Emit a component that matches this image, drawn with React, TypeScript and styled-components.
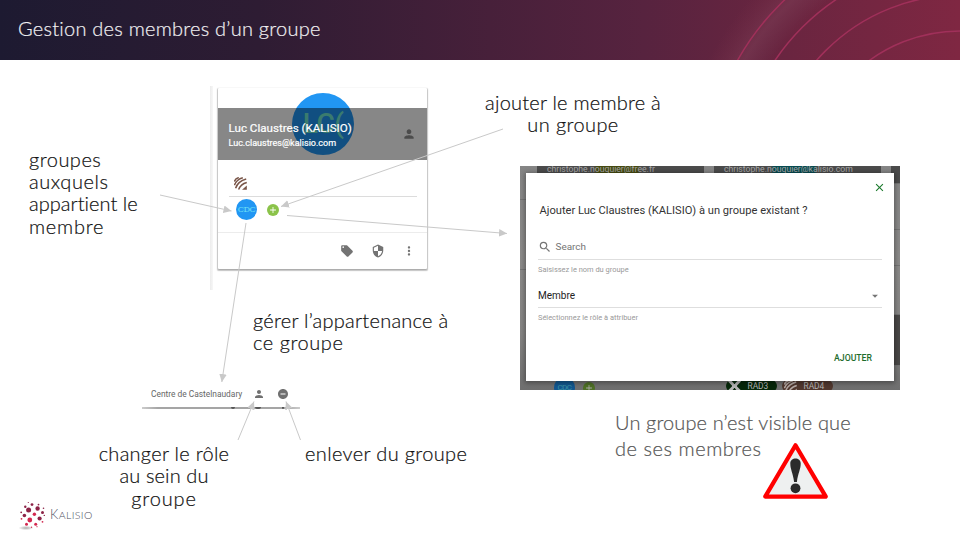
import React from "react";
import styled, { createGlobalStyle } from "styled-components";
import {
  MdAdd, MdArrowDropDown, MdClose, MdLocalOffer, MdMoreVert,
  MdPerson, MdRemoveCircle, MdSearch, MdSecurity,
} from "react-icons/md";

const Global = createGlobalStyle`
  * { box-sizing: border-box; }
  body { margin: 0; background: #fff; font-family: Roboto, "Liberation Sans", sans-serif; }
  svg { display: block; flex: none; }
`;

const Slide = styled.main`
  width: 960px;
  height: 540px;
  overflow: hidden;
  display: flex;
  flex-direction: column;
  background: #fff;
`;

const Header = styled.header`
  position: relative;
  flex: none;
  height: 60px;
  padding: 0 0 4px 18px;
  display: flex;
  align-items: center;
  background: linear-gradient(90deg, #1d1a31 0%, #2e1c33 27%, #47203a 51%, #57233f 67%, #6a2540 82%, #7f2742 100%);
`;

const HeaderArcs = styled.svg`
  position: absolute;
  right: 0;
  top: 0;
`;

const Title = styled.h1`
  margin: 0;
  font: 300 20px/24px Lato, sans-serif;
  letter-spacing: 0.24px;
  color: #f1f0f2;
  -webkit-text-stroke: 0.2px #f1f0f2;
`;

/* Free canvas under the header: captions, captures and arrows are pinned on it. */
const Canvas = styled.section`
  position: relative;
  flex: 1;
`;

const Pin = styled.div<{ $x: number; $y: number; $w?: number }>`
  position: absolute;
  left: ${(p) => p.$x}px;
  top: ${(p) => p.$y - 60}px;
  ${(p) => p.$w && `width: ${p.$w}px;`}
`;

const Caption = styled(Pin)<{ $center?: boolean; $muted?: boolean }>`
  display: flex;
  flex-direction: column;
  align-items: ${(p) => (p.$center ? "center" : "flex-start")};
  font: 300 20px/${(p) => (p.$muted ? 26 : 22.4)}px Lato, sans-serif;
  color: ${(p) => (p.$muted ? "#555" : "#111")};
  -webkit-text-stroke: 0.2px currentColor;
  white-space: nowrap;
`;

const Line = styled.span<{ $track?: number }>`
  letter-spacing: ${(p) => p.$track ?? 0}px;
`;

const PageEdge = styled(Pin)`
  height: 204px;
  background: linear-gradient(90deg, #ececec, #f7f7f7);
`;

const Card = styled(Pin)`
  height: 181px;
  display: flex;
  flex-direction: column;
  background: #fff;
  border-radius: 1px;
  box-shadow: 0 1px 2px 0 rgba(0, 0, 0, 0.25), 0 1px 1px 0.5px rgba(0, 0, 0, 0.17);
`;

const Cover = styled.div`
  position: relative;
  height: 72px;
  display: flex;
  flex-direction: column;
  justify-content: flex-end;
`;

const BigAvatar = styled.div`
  position: absolute;
  left: 74px;
  top: 5px;
  width: 62px;
  height: 62px;
  border-radius: 50%;
  display: grid;
  place-items: center;
  background: #2196f3;
  color: #6fe8d0;
  font: 500 28px/1 Roboto, sans-serif;
  letter-spacing: -0.5px;
`;

const Shade = styled.div`
  position: relative;
  height: 52px;
  padding: 0 11px 0 10.5px;
  display: flex;
  align-items: center;
  justify-content: space-between;
  background: rgba(0, 0, 0, 0.47);
  color: #4c4c4c;
`;

const Identity = styled.div`
  display: flex;
  flex-direction: column;
  padding-top: 3px;
  color: #fff;
`;

const Name = styled.span`
  font: 11.6px/16px Roboto, sans-serif;
  -webkit-text-stroke: 0.2px #fff;
`;

const Mail = styled.span`
  font: 9.03px/15px Roboto, sans-serif;
  -webkit-text-stroke: 0.2px #fff;
`;

const OrgRow = styled.div`
  height: 37px;
  margin: 0 10px 0 11px;
  padding: 17px 0 0 4.5px;
  border-bottom: 1px solid #dcdcdc;
`;

const GroupRow = styled.div`
  height: 36px;
  padding: 2px 0 0 18px;
  display: flex;
  align-items: flex-start;
  gap: 9.5px;
  border-bottom: 1px solid #ececec;
`;

const GroupBadge = styled.span<{ $dim?: boolean }>`
  flex: none;
  width: 21px;
  height: 21px;
  border-radius: 50%;
  display: grid;
  place-items: center;
  background: ${(p) => (p.$dim ? "#12578f" : "#2196f3")};
  color: ${(p) => (p.$dim ? "#3d93a3" : "#6fe0f5")};
  font: ${(p) => (p.$dim ? `8px/1 Roboto, sans-serif` : `8.2px/1 "DejaVu Serif", serif`)};
  letter-spacing: -0.5px;
`;

const AddBadge = styled.span<{ $dim?: boolean }>`
  flex: none;
  width: 12px;
  height: 12px;
  margin-top: 5px;
  border-radius: 50%;
  display: grid;
  place-items: center;
  background: ${(p) => (p.$dim ? "#4f7027" : "#8bc34a")};
  color: ${(p) => (p.$dim ? "#aaa" : "#fff")};
`;

const CardActions = styled.div`
  flex: 1;
  display: flex;
  align-items: center;
  justify-content: flex-end;
  gap: 17px;
  padding-right: 11.5px;
  color: #737373;
`;

const Capture = styled(Pin)`
  height: 224px;
  display: grid;
  grid-template-rows: 7px 208px 9px;
  overflow: hidden;
  background: linear-gradient(#858585, #8b8a89 40%, #858483 75%, #6f6f6f);
`;

const BackStrip = styled.div`
  display: flex;
  gap: 10px;
  padding-left: 17px;
  overflow: hidden;
`;

const BackCover = styled.div<{ $hue: string }>`
  flex: none;
  width: 167px;
  padding-left: 10px;
  background: linear-gradient(90deg, #4b4b4b 34%, ${(p) => p.$hue} 36%, ${(p) => p.$hue} 60%, #4b4b4b 62%);
  color: #a8a8a8;
  font: 8.67px/7px Roboto, sans-serif;
`;

const Middle = styled.div`
  display: grid;
  grid-template-columns: 6px 368px 6px;
`;

const SideGutter = styled.div`
  display: flex;
  flex-direction: column;
`;

const SideBlock = styled.div<{ $h: number; $tone?: string }>`
  height: ${(p) => p.$h}px;
  background: ${(p) => p.$tone ?? "transparent"};
  border-bottom: 1px solid #747474;
`;

const Dialog = styled.div`
  position: relative;
  padding: 0 12px;
  display: flex;
  flex-direction: column;
  background: #fff;
  box-shadow: 0 1px 5px 1px rgba(0, 0, 0, 0.35);
`;

const CloseRow = styled.div`
  display: flex;
  justify-content: flex-end;
  height: 27px;
  padding: 8px 0 0;
  margin-right: -4px;
  color: #1b7a2c;
`;

const Question = styled.p`
  margin: 0;
  padding-left: 1.5px;
  height: 35px;
  font: 11.13px/21px Roboto, sans-serif;
  color: #333;
  white-space: nowrap;
`;

const Field = styled.div<{ $filled?: boolean }>`
  height: 25px;
  padding-top: ${(p) => (p.$filled ? 2 : 0)}px;
  display: flex;
  align-items: center;
  justify-content: space-between;
  border-bottom: 1px solid #dedede;
  font: ${(p) => (p.$filled ? 10 : 9.93)}px/14px Roboto, sans-serif;
  color: ${(p) => (p.$filled ? "#222" : "#757575")};
`;

const SelectCaret = styled(MdArrowDropDown)`
  color: #757575;
  margin-right: 0.5px;
`;

const SearchHint = styled.span`
  display: flex;
  align-items: center;
  gap: 3.5px;
`;

const Helper = styled.span`
  height: 23px;
  padding-top: 4px;
  font: 7.45px/11px Roboto, sans-serif;
  color: #999;
`;

const AddButton = styled.button`
  margin: 20px 10px 0 auto;
  padding: 0;
  border: 0;
  background: none;
  color: #1e6b2b;
  font: 500 8.7px/14px Roboto, sans-serif;
`;

const BackFooter = styled.div`
  display: flex;
  padding-left: 34px;
  overflow: hidden;
`;

const BackGroups = styled.div`
  width: 172px;
  display: flex;
  gap: 8px;
  margin-top: -4px;
`;

const Chip = styled.span<{ $tone: string }>`
  width: 51px;
  height: 12px;
  margin: -1px 5px 0 0;
  padding-left: 2px;
  display: flex;
  align-items: center;
  gap: 6.5px;
  border-radius: 6px;
  background: ${(p) => p.$tone};
  color: #b5b5b5;
  font: 8.4px/12px Roboto, sans-serif;
`;

const GroupLine = styled(Pin)`
  height: 30px;
  padding: 0 11px 0 9px;
  display: flex;
  align-items: center;
  color: #666;
  font: 8.4px/14px Roboto, sans-serif;
`;

const LineIcons = styled.span`
  margin-left: auto;
  display: flex;
  gap: 12px;
  color: #707070;
`;

const CutEdge = styled(Pin)`
  height: 2px;
  background: linear-gradient(90deg, #ccc, #a5a5a5 10%, #a5a5a5 90%, #ccc);
`;

const CutIcon = styled(Pin)`
  height: 2px;
  border-radius: 0 0 2px 2px;
  background: #555;
`;

const Brand = styled(Pin)`
  display: flex;
  align-items: center;
  gap: 3px;
`;

const BrandName = styled.span`
  font: 300 10.5px/16px Lato, sans-serif;
  letter-spacing: 0.4px;
  color: #4d4e5e;
  &::first-letter { font-size: 13px; }
  display: block;
`;

const Arrows = styled.svg`
  position: absolute;
  left: 0;
  top: -60px;
  pointer-events: none;
`;

const Stripes = ({ size = 13, color = "#795548" }: { size?: number; color?: string }) => (
  <svg width={size} height={size} viewBox="0 0 13 13" fill="none" stroke={color} strokeWidth="1.5">
    <path d="M0.4 4.6Q1.2 1.4 4.8 0.6" />
    <path d="M0.4 8.2Q2.4 2.6 8.8 0.8" />
    <path d="M1.6 11.2Q4 4.2 12.2 2" />
    <path d="M4.6 12.6Q6.6 7 12.8 5.4" />
    <path d="M8 12.8L12.8 8.6V12.8Z" fill={color} stroke="none" />
  </svg>
);

const Cross = () => (
  <svg width="13" height="12" viewBox="0 0 13 12" stroke="#b5b5b5" strokeWidth="3">
    <path d="M1 0.5L5 4.5M12 0.5L8 4.5M1 11.5L5 7.5M12 11.5L8 7.5" />
    <path d="M4 6H9" strokeWidth="4" />
  </svg>
);

const Globe = () => (
  <svg width="28" height="31" viewBox="0 0 28 31">
    <defs>
      <radialGradient id="ground">
        <stop offset="0" stopColor="#aaa" />
        <stop offset="1" stopColor="#fff" />
      </radialGradient>
    </defs>
    <ellipse cx="7" cy="29" rx="7.5" ry="2.2" fill="url(#ground)" />
    <g fill="#8c2347">
      <circle cx="9.6" cy="11" r="2.5" />
      <circle cx="18.6" cy="9.5" r="2.2" />
      <circle cx="5.4" cy="16.5" r="1.8" />
      <circle cx="20.6" cy="19.5" r="2.1" />
      <circle cx="6.3" cy="7.8" r="1.2" />
      <circle cx="13" cy="5.6" r="1.4" />
      <circle cx="19.5" cy="5.6" r="0.9" />
      <circle cx="23.5" cy="13.5" r="1.5" />
      <circle cx="24.5" cy="9.2" r="0.8" />
      <circle cx="2.2" cy="13.3" r="0.9" />
      <circle cx="25.3" cy="16.4" r="0.7" />
      <circle cx="9.3" cy="3.5" r="0.6" />
    </g>
    <g fill="#d3284f">
      <circle cx="10.8" cy="21" r="2.4" />
      <circle cx="15.4" cy="15.3" r="1.7" />
      <circle cx="7.5" cy="25.2" r="1.5" />
      <circle cx="16.7" cy="25.2" r="1.5" />
      <circle cx="2.5" cy="19.8" r="0.9" />
      <circle cx="23.5" cy="22.8" r="0.9" />
      <circle cx="12.5" cy="28.2" r="0.7" />
      <circle cx="18" cy="27.7" r="0.6" />
    </g>
  </svg>
);

const Warning = () => (
  <svg width="66" height="58" viewBox="0 0 66 58">
    <path d="M32.5 3.2L62.8 54.6H2.2Z" fill="#eef0f0" stroke="#f00" strokeWidth="4.2" strokeLinejoin="round" />
    <path d="M27.3 21.5C27.3 14.8 37.7 14.8 37.7 21.5C37.7 27.5 35 31 33.9 40H31.1C30 31 27.3 27.5 27.3 21.5Z" fill="#2b2b2b" />
    <circle cx="32.5" cy="46.3" r="4.9" fill="#2b2b2b" />
  </svg>
);

const arrows: [number, number, number, number][] = [
  [160, 195, 231.5, 211],
  [503, 129, 281, 206.5],
  [287, 215.5, 507, 233.5],
  [246, 223, 221.8, 382],
  [238, 440, 254, 401.5],
  [300.5, 440, 286, 401.5],
];

const ArrowLayer = () => (
  <Arrows width="960" height="540">
    <defs>
      <marker id="head" viewBox="0 0 8 8" refX="8" refY="4" markerWidth="8" markerHeight="8" markerUnits="userSpaceOnUse" orient="auto">
        <path d="M0 0.2L8 4L0 7.8Z" fill="#c9c9c9" />
      </marker>
    </defs>
    {arrows.map(([x1, y1, x2, y2]) => (
      <line key={`${x1}-${y1}`} x1={x1} y1={y1} x2={x2} y2={y2} stroke="#c9c9c9" strokeWidth="1" markerEnd="url(#head)" />
    ))}
  </Arrows>
);

export default function App() {
  return (
    <Slide>
      <Global />
      <Header>
        <HeaderArcs width="320" height="60" viewBox="640 0 320 60">
          <defs>
            <radialGradient id="glow" gradientUnits="userSpaceOnUse" cx="960" cy="185" r="290">
              <stop offset="0.78" stopColor="#7a4058" stopOpacity="0" />
              <stop offset="0.86" stopColor="#7d3f57" stopOpacity="0.5" />
              <stop offset="0.97" stopColor="#7a3048" stopOpacity="0" />
            </radialGradient>
          </defs>
          <rect x="640" width="320" height="60" fill="url(#glow)" />
          <g fill="none" stroke="#a0305a" strokeWidth="1.5">
            <circle cx="960" cy="185" r="154" />
            <circle cx="960" cy="185" r="190" />
            <circle cx="960" cy="185" r="223" />
            <circle cx="960" cy="185" r="255" />
          </g>
        </HeaderArcs>
        <Title>Gestion des membres d’un groupe</Title>
      </Header>

      <Canvas>
        <PageEdge $x={210} $y={86} $w={3} />
        <Card $x={218} $y={88} $w={209}>
          <Cover>
            <BigAvatar>LC(</BigAvatar>
            <Shade>
              <Identity>
                <Name>Luc Claustres (KALISIO)</Name>
                <Mail>Luc.claustres@kalisio.com</Mail>
              </Identity>
              <MdPerson size={14} />
            </Shade>
          </Cover>
          <OrgRow><Stripes /></OrgRow>
          <GroupRow>
            <GroupBadge>CDC</GroupBadge>
            <AddBadge><MdAdd size={10} /></AddBadge>
          </GroupRow>
          <CardActions>
            <MdLocalOffer size={14} />
            <MdSecurity size={14} />
            <MdMoreVert size={14} />
          </CardActions>
        </Card>

        <Capture $x={520} $y={166} $w={380}>
          <BackStrip>
            <BackCover $hue="#454a10">christophe.nouquier@free.fr</BackCover>
            <BackCover $hue="#064b50">christophe.nouquier@kalisio.com</BackCover>
            <BackCover $hue="#4b4b4b" />
          </BackStrip>
          <Middle>
            <SideGutter>
              <SideBlock $h={27} />
              <SideBlock $h={70} />
            </SideGutter>
            <Dialog>
              <CloseRow><MdClose size={13} /></CloseRow>
              <Question>Ajouter Luc Claustres (KALISIO) à un groupe existant ?</Question>
              <Field>
                <SearchHint><MdSearch size={14} />Search</SearchHint>
              </Field>
              <Helper>Saisissez le nom du groupe</Helper>
              <Field $filled>
                Membre
                <SelectCaret size={14} />
              </Field>
              <Helper>Sélectionnez le rôle à attribuer</Helper>
              <AddButton>AJOUTER</AddButton>
            </Dialog>
            <SideGutter>
              <SideBlock $h={11} $tone="#4b4b4b" />
              <SideBlock $h={46} />
              <SideBlock $h={36} />
              <SideBlock $h={49} />
              <SideBlock $h={51} $tone="#4a4847" />
            </SideGutter>
          </Middle>
          <BackFooter>
            <BackGroups>
              <GroupBadge $dim>CDC</GroupBadge>
              <AddBadge $dim><MdAdd size={10} /></AddBadge>
            </BackGroups>
            <Chip $tone="#06280a"><Cross />RAD3</Chip>
            <Chip $tone="#51382f"><Stripes color="#b5aaa6" />RAD4</Chip>
          </BackFooter>
        </Capture>

        <GroupLine $x={142} $y={379} $w={158}>
          Centre de Castelnaudary
          <LineIcons>
            <MdPerson size={12} />
            <MdRemoveCircle size={12} />
          </LineIcons>
        </GroupLine>
        <CutEdge $x={142} $y={407} $w={158} />
        <CutIcon $x={231} $y={407} $w={4} />
        <CutIcon $x={255} $y={407} $w={6} />
        <CutIcon $x={282} $y={407} $w={2} />

        <Caption $x={29} $y={147.5}>
          <Line $track={0.5}>groupes</Line>
          <Line $track={0.56}>auxquels</Line>
          <Line $track={0.04}>appartient le</Line>
          <Line $track={0.75}>membre</Line>
        </Caption>
        <Caption $x={473} $y={91} $w={200} $center>
          <Line $track={0.22}>ajouter le membre à</Line>
          <Line $track={0.4}>un groupe</Line>
        </Caption>
        <Caption $x={253} $y={309}>
          <Line $track={0.26}>gérer l’appartenance à</Line>
          <Line $track={0.55}>ce groupe</Line>
        </Caption>
        <Caption $x={84} $y={442} $w={160} $center>
          <Line $track={0.28}>changer le rôle</Line>
          <Line $track={0.12}>au sein du</Line>
          <Line $track={0.9}>groupe</Line>
        </Caption>
        <Caption $x={305} $y={442}>
          <Line $track={0.36}>enlever du groupe</Line>
        </Caption>
        <Caption $x={615} $y={409} $muted>
          <Line $track={0.12}>Un groupe n’est visible que</Line>
          <Line $track={0.55}>de ses membres</Line>
        </Caption>
        <Pin $x={763} $y={441.5}><Warning /></Pin>

        <Brand $x={19} $y={499}>
          <Globe />
          <BrandName>KALISIO</BrandName>
        </Brand>
        <ArrowLayer />
      </Canvas>
    </Slide>
  );
}
